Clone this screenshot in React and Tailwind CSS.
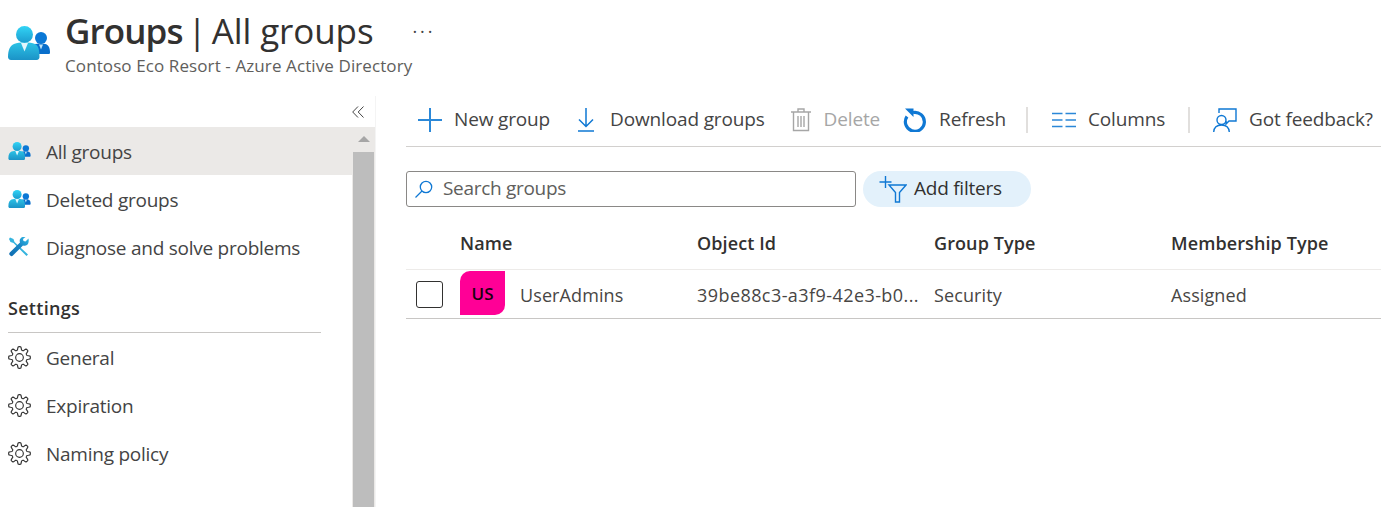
import React from 'react';

function PeopleIcon({ className }) {
  return (
    <svg viewBox="0 0 42 34" className={className}>
      <defs>
        <linearGradient id="peopleBig" x1="0" y1="0" x2="0" y2="1">
          <stop offset="0" stopColor="#32d4f5" />
          <stop offset="1" stopColor="#1c9ccf" />
        </linearGradient>
        <linearGradient id="peopleBody" x1="0" y1="0" x2="0" y2="1">
          <stop offset="0" stopColor="#2cc3e6" />
          <stop offset="1" stopColor="#1b93c7" />
        </linearGradient>
      </defs>
      <circle cx="33" cy="12" r="6" fill="#0a78d6" />
      <path d="M25 19c2-1 3.500-1.500 8-1.500s7 1 8 3.500c.7 1.500 1 3 1 5.500 0 1-.6 1.500-1.500 1.500H27z" fill="#0a6fcb" />
      <path d="M31 18.500h4l-2 5z" fill="#bfe3f5" />
      <circle cx="16.500" cy="8.500" r="8.500" fill="url(#peopleBig)" />
      <path d="M0 31c0-7 2-11.500 6-13 3-1.200 6-1.500 10.500-1.500s8 .4 10.500 1.500c3.500 1.600 4.500 6 4.500 13 0 1.500-.8 3-3 3H3c-2 0-3-1.500-3-3z" fill="url(#peopleBody)" />
      <path d="M13 17h7l-3.500 8.500z" fill="#e3f6fc" />
    </svg>
  );
}

function ToolsIcon({ className }) {
  return (
    <svg viewBox="0 0 20 20" className={className}>
      <defs>
        <linearGradient id="toolWrench" x1="0" y1="1" x2="1" y2="0">
          <stop offset="0" stopColor="#0f6cb0" />
          <stop offset="0.55" stopColor="#1a86c4" />
          <stop offset="1" stopColor="#32bde8" />
        </linearGradient>
      </defs>
      <path d="M1 0.500l3.500 1.500 1 3L19 17.500 17.500 19 4.500 6l-3-1L0 2z" fill="#35b4de" />
      <path d="M19.500 1.500l-3 3-2-.5-.5-2 2.500-2c-2-.5-4 0-5 1.500-1 1.200-1 2.500-.5 4L.8 15.500c-.8.800-.8 1.800 0 2.600l.5.500c.8.800 1.800.8 2.600 0L14 8.500c1.500.5 3 .3 4.300-.8 1.300-1.300 1.700-4 1.200-6.200z" fill="url(#toolWrench)" />
    </svg>
  );
}

// scalloped outline with 8 teeth
const gearPoints = Array.from({ length: 96 }, (_, i) => {
  const a = (i / 96) * Math.PI * 2;
  const wave = Math.max(-1, Math.min(1, Math.cos(a * 8) * 1.7));
  const r = 9.6 + wave * 1.7;
  return `${(12 + r * Math.cos(a)).toFixed(2)},${(12 + r * Math.sin(a)).toFixed(2)}`;
}).join(' ');

function GearIcon() {
  return (
    <svg viewBox="0 0 24 24" className="h-[23px] w-[23px] text-[#333]" fill="none" stroke="currentColor" strokeWidth="1.200">
      <polygon points={gearPoints} strokeLinejoin="round" />
      <circle cx="12" cy="12" r="4" />
    </svg>
  );
}

function NavItem({ icon, label, active }) {
  return (
    <div className={`flex h-12 items-center pl-2 ${active ? 'bg-[#ebe9e7]' : ''}`}>
      <span className="flex w-[38px] shrink-0">{icon}</span>
      <span className="pt-[2px] text-[19px] tracking-[-0.25px] text-[#444]">{label}</span>
    </div>
  );
}

function ToolButton({ icon, label, className = '', textClass = 'text-[#444]' }) {
  return (
    <div className={`flex items-center ${className}`}>
      {icon}
      <span className={`text-[19px] tracking-[-0.15px] whitespace-nowrap ${textClass}`}>{label}</span>
    </div>
  );
}

export default function App() {
  return (
    <div className="h-[507px] w-[1381px] overflow-hidden bg-white font-['Open_Sans',sans-serif]">
      {/* Header */}
      <div className="flex h-[96px] items-start">
        <PeopleIcon className="ml-2 mt-[26px] h-[34px] w-[42px] shrink-0" />
        <div className="ml-[15px] mt-[8px]">
          <div className="flex text-[35px] leading-[46px] whitespace-nowrap text-[#323130]">
            <span className="font-semibold tracking-[-0.9px]">Groups</span>
            <span className="ml-[5px] tracking-[-0.1px]">|</span>
            <span className="ml-[5px] tracking-[-0.1px]">All groups</span>
          </div>
          <div className="text-[17px] leading-[24px] tracking-[0.1px] whitespace-nowrap text-[#605e5c]">
            Contoso Eco Resort - Azure Active Directory
          </div>
        </div>
        <div className="mt-[19px] text-[18px] leading-[24px] tracking-[3px] text-[#444]">···</div>
      </div>

      <div className="flex">
        {/* Sidebar */}
        <div className="flex h-[411px] w-[376px] shrink-0 border-r border-[#f4f4f4]">
          <div className="w-[352px] shrink-0 overflow-hidden">
            <div className="h-[31px]" />
            <NavItem active label="All groups" icon={<PeopleIcon className="h-[18px] w-[23px]" />} />
            <NavItem label="Deleted groups" icon={<PeopleIcon className="h-[18px] w-[23px]" />} />
            <NavItem label="Diagnose and solve problems" icon={<ToolsIcon className="ml-[1px] h-[20px] w-[20px]" />} />
            <div className="mx-2 mt-[23px] flex h-[39px] w-[313px] items-start border-b border-[#c8c6c4] pt-[1px] text-[18px] font-semibold tracking-[0.3px] text-[#323130]">
              Settings
            </div>
            <NavItem label="General" icon={<GearIcon />} />
            <NavItem label="Expiration" icon={<GearIcon />} />
            <NavItem label="Naming policy" icon={<GearIcon />} />
            <div className="mx-2 mt-[26px] text-[18px] font-semibold tracking-[0.3px] text-[#323130]">Activity</div>
          </div>
          <div className="w-[23px] shrink-0">
            <div className="flex h-[31px] items-center justify-start">
              <svg viewBox="0 0 12 12" className="h-[12px] w-[12px] text-[#444]" fill="none" stroke="currentColor" strokeWidth="1">
                <path d="M6 0.500L0.700 6L6 11.500M11.500 0.500L6.200 6l5.300 5.500" />
              </svg>
            </div>
            <div className="h-[25px] bg-[#ebe9e7] pt-[9px]">
              <div className="mx-auto h-0 w-0 border-x-[6px] border-b-[6px] border-x-transparent border-b-[#a6a6a6]" />
            </div>
            <div className="h-[355px] border-x border-[#ebe9e7] bg-[#bdbdbd]" />
          </div>
        </div>

        {/* Main */}
        <div className="ml-[30px] min-w-0 flex-1">
          <div className="flex h-[51px] items-center border-b border-[#d2d0ce] pb-[3px] pl-[12px]">
            <ToolButton
              label="New group"
              icon={
                <svg viewBox="0 0 24 24" className="mr-[12px] h-[24px] w-[24px] text-[#2b88d8]" fill="none" stroke="currentColor" strokeWidth="2">
                  <path d="M12 0v24M0 12h24" />
                </svg>
              }
            />
            <ToolButton
              className="ml-[27px]"
              label="Download groups"
              icon={
                <svg viewBox="0 0 18 24" className="mr-[15px] h-[24px] w-[18px] text-[#0f78d4]" fill="none" stroke="currentColor" strokeWidth="1.500">
                  <path d="M9 0v18M2 11.500l7 7 7-7M1 23h16" />
                </svg>
              }
            />
            <ToolButton
              className="ml-[26px]"
              label="Delete"
              textClass="text-[#a6a6a6]"
              icon={
                <svg viewBox="0 0 20 24" className="mr-[13px] h-[24px] w-[20px] text-[#a6a6a6]" fill="none" stroke="currentColor" strokeWidth="1.400">
                  <path d="M0 4h20M7 4V1h6v3M2.500 4v18.500h15V4M7 8v11M10 8v11M13 8v11" />
                </svg>
              }
            />
            <ToolButton
              className="ml-[23px]"
              label="Refresh"
              icon={
                <svg viewBox="0 0 24 24" className="mr-[12px] h-[24px] w-[24px] text-[#0f78d4]" fill="none" stroke="currentColor" strokeWidth="3.200">
                  <path d="M10 4.500A9.500 9.500 0 1 1 4 8.500" />
                  <path d="M2 0.500h8.500V9z" fill="currentColor" stroke="none" />
                </svg>
              }
            />
            <div className="ml-[20px] h-[26px] w-[2px] bg-[#e1dfdd]" />
            <ToolButton
              className="ml-[24px]"
              label="Columns"
              icon={
                <svg viewBox="0 0 24 16" className="mr-[12px] h-[16px] w-[24px] text-[#2b88d8]" fill="none" stroke="currentColor" strokeWidth="1.600">
                  <path d="M0 1.500h10.500M13.500 1.500H24M0 8h10.500M13.500 8H24M0 14.500h10.500M13.500 14.500H24" />
                </svg>
              }
            />
            <div className="ml-[23px] h-[26px] w-[2px] bg-[#e1dfdd]" />
            <ToolButton
              className="ml-[23px]"
              label="Got feedback?"
              icon={
                <svg viewBox="0 0 24 24" className="mr-[12px] h-[24px] w-[24px] text-[#0f78d4]" fill="none" stroke="currentColor" strokeWidth="1.400">
                  <path d="M6 5V1h17v12h-7l-3 3v-3" />
                  <circle cx="8.500" cy="12" r="4.500" />
                  <path d="M0.700 24c.3-4 3-7 7.800-7s7.500 3 7.800 7" />
                </svg>
              }
            />
          </div>

          <div className="mt-[24px] flex">
            <div className="flex h-[36px] w-[450px] items-center rounded-[3px] border border-[#8a8886] pl-[8px]">
              <svg viewBox="0 0 18 18" className="mr-[10px] h-[18px] w-[18px] text-[#0f78d4]" fill="none" stroke="currentColor" strokeWidth="1.300">
                <circle cx="11" cy="7" r="5.700" />
                <path d="M7 11l-6.500 6.500" />
              </svg>
              <span className="mb-[2px] text-[19px] tracking-[-0.3px] text-[#605e5c]">Search groups</span>
            </div>
            <div className="ml-[7px] flex h-[36px] w-[168px] items-center rounded-full bg-[#e3f1fb] pl-[16px]">
              <svg viewBox="0 0 28 28" className="mr-[7px] h-[28px] w-[28px] text-[#0f78d4]" fill="none" stroke="currentColor" strokeWidth="1.400">
                <path d="M6.500 1v12M0.500 7h12" />
                <path d="M10 10h17l-6.500 7.500V27h-4v-9.500z" />
              </svg>
              <span className="mb-[2px] text-[19px] tracking-[-0.25px] text-[#323130]">Add filters</span>
            </div>
          </div>

          {/* Table */}
          <div className="mt-[19px] grid h-[44px] grid-cols-[54px_237px_237px_237px_1fr] items-center border-b border-[#edebe9] pb-[8px] text-[18px] font-semibold tracking-[0.1px] text-[#323130]">
            <div />
            <div>Name</div>
            <div>Object Id</div>
            <div>Group Type</div>
            <div>Membership Type</div>
          </div>
          <div className="grid h-[49px] grid-cols-[54px_237px_237px_237px_1fr] items-center border-b border-[#c8c6c4] text-[18px] tracking-[0.1px] text-[#484644]">
            <div className="pl-[10px]">
              <div className="h-[27px] w-[27px] rounded-[3px] border border-[#323130]" />
            </div>
            <div className="flex items-center">
              <div className="mb-[3px] flex h-[44px] w-[45px] items-center justify-center rounded-tl-[10px] rounded-br-[10px] bg-[#ff0096] pt-[3px] text-[17px] font-semibold tracking-normal text-[#1a0010]">
                US
              </div>
              <span className="ml-[15px] pt-[2px]">UserAdmins</span>
            </div>
            <div className="truncate pt-[2px] pr-[9px] tracking-[0.43px]">39be88c3-a3f9-42e3-b0...</div>
            <div className="pt-[2px]">Security</div>
            <div className="pt-[2px]">Assigned</div>
          </div>
        </div>
      </div>
    </div>
  );
}
